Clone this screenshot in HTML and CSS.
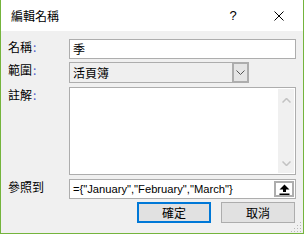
FILE: index.html
```html
<!DOCTYPE html>
<html lang="zh-Hant">
<head>
    <meta charset="UTF-8">
    <title>編輯名稱</title>
    <link rel="stylesheet" href="styles.css">
</head>
<body>
    <div class="dialog">
        <div class="titlebar">
            <span class="title">編輯名稱</span>
            <span class="help">?</span>
            <span class="close">
                <svg width="10" height="10" viewBox="0 0 10 10"><path d="M0.5 0.5 L9.5 9.5 M9.5 0.5 L0.5 9.5" stroke="#000" stroke-width="1"/></svg>
            </span>
        </div>
        <div class="content">
            <div class="row">
                <label class="label">名稱<span class="colon">:</span></label>
                <div class="field input">季</div>
            </div>
            <div class="row row-select">
                <label class="label">範圍<span class="colon">:</span></label>
                <div class="field select">
                    <span class="select-text">活頁簿</span>
                    <span class="drop">
                        <svg width="9" height="5" viewBox="0 0 9 5"><path d="M0.5 0.5 L4.5 4.5 L8.5 0.5" fill="none" stroke="#555" stroke-width="1"/></svg>
                    </span>
                </div>
            </div>
            <div class="row row-comment">
                <label class="label">註解<span class="colon">:</span></label>
                <div class="field textarea">
                    <div class="scrollbar">
                        <svg width="9" height="5" viewBox="0 0 9 5"><path d="M0.5 4.5 L4.5 0.5 L8.5 4.5" fill="none" stroke="#c2c2c2" stroke-width="1.5"/></svg>
                        <svg width="9" height="5" viewBox="0 0 9 5"><path d="M0.5 0.5 L4.5 4.5 L8.5 0.5" fill="none" stroke="#c2c2c2" stroke-width="1.5"/></svg>
                    </div>
                </div>
            </div>
            <div class="row row-ref">
                <label class="label">參照到</label>
                <div class="field input ref">
                    <span class="ref-text">={"January","February","March"}</span>
                    <span class="collapse">
                        <svg width="11" height="11" viewBox="0 0 11 11"><path d="M5.5 0.5 L10.5 5.5 L7 5.5 L7 8 L4 8 L4 5.5 L0.5 5.5 Z" fill="#000"/><rect x="0.5" y="9.5" width="10" height="1.5" fill="#000"/></svg>
                    </span>
                </div>
            </div>
            <div class="buttons">
                <button class="btn default">確定</button>
                <button class="btn">取消</button>
            </div>
        </div>
        <svg class="grip" width="12" height="10" viewBox="0 0 12 10">
            <rect x="10" y="0" width="1" height="1" fill="#b8b8b8"/>
            <rect x="7" y="3" width="1" height="1" fill="#b8b8b8"/>
            <rect x="10" y="3" width="1" height="1" fill="#b8b8b8"/>
            <rect x="4" y="6" width="1" height="1" fill="#b8b8b8"/>
            <rect x="7" y="6" width="1" height="1" fill="#b8b8b8"/>
            <rect x="10" y="6" width="1" height="1" fill="#b8b8b8"/>
            <rect x="1" y="9" width="1" height="1" fill="#b8b8b8"/>
            <rect x="4" y="9" width="1" height="1" fill="#b8b8b8"/>
            <rect x="7" y="9" width="1" height="1" fill="#b8b8b8"/>
            <rect x="10" y="9" width="1" height="1" fill="#b8b8b8"/>
        </svg>
    </div>
</body>
</html>
```

FILE: styles.css
```css
body {
    margin: 0;
    background: #f0f0f0;
    font-family: 'Noto Sans CJK TC', sans-serif;
    font-size: 12px;
    color: #000;
}

.dialog {
    position: relative;
    width: 304px;
    height: 234px;
    box-sizing: border-box;
    border: 1px solid #74b43c;
    border-top: none;
    background: #f0f0f0;
    overflow: hidden;
}

/* Title bar */
.titlebar {
    height: 31px;
    background: #fff;
    display: flex;
    align-items: center;
}

.title {
    margin-left: 10px;
    font-size: 12px;
    line-height: 14px;
    flex: 1;
}

.help {
    font-family: 'Liberation Sans', sans-serif;
    font-size: 13px;
    width: 10px;
    text-align: center;
    margin-right: 36px;
}

.close {
    display: flex;
    width: 10px;
    margin-right: 19px;
}

/* Form */
.content {
    padding: 8px 7px 0 7px;
}

.row {
    display: flex;
}

.row-select { margin-top: 3px; }
.row-comment { margin-top: 4px; }
.row-ref { margin-top: 4px; }

.label {
    width: 61px;
    flex: none;
    line-height: 14px;
    padding-top: 1px;
}

.colon {
    color: #4a55c8;
    margin-left: 1px;
}

.field {
    box-sizing: border-box;
    border: 1px solid #adadad;
    background: #fff;
}

.input {
    width: 227px;
    height: 20px;
    padding-left: 3px;
    line-height: 18px;
}

.select {
    width: 180px;
    height: 21px;
    background: #efefef;
    display: flex;
    align-items: stretch;
}

.select-text {
    flex: 1;
    padding-left: 3px;
    line-height: 19px;
}

.drop {
    width: 17px;
    box-sizing: border-box;
    border: 2px solid #adadad;
    margin: -1px -1px -1px 0;
    background: #e5e5e5;
    display: flex;
    align-items: center;
    justify-content: center;
}

.textarea {
    width: 227px;
    height: 88px;
    display: flex;
    justify-content: flex-end;
    padding: 1px;
}

.scrollbar {
    width: 16px;
    background: #f0f0f0;
    display: flex;
    flex-direction: column;
    justify-content: space-between;
    align-items: center;
    padding: 9px 0 7px;
}

.ref {
    display: flex;
    align-items: center;
    padding-right: 1px;
}

.ref-text {
    flex: 1;
    font-family: 'Liberation Sans', sans-serif;
    font-size: 11.2px;
}

.collapse {
    width: 20px;
    height: 16px;
    box-sizing: border-box;
    border: 2px solid #adadad;
    background: #fff;
    display: flex;
    align-items: center;
    justify-content: center;
}

/* Buttons */
.buttons {
    display: flex;
    justify-content: flex-end;
    gap: 10px;
    margin-top: 3px;
    padding-right: 1px;
}

.btn {
    width: 74px;
    height: 21px;
    box-sizing: border-box;
    border: 1px solid #adadad;
    background: #e1e1e1;
    font-family: 'Noto Sans CJK TC', sans-serif;
    font-size: 12px;
    padding: 0;
    color: #000;
}

.btn.default {
    border: 2px solid #0078d7;
}

.grip {
    position: absolute;
    right: 1px;
    bottom: 1px;
}
```
